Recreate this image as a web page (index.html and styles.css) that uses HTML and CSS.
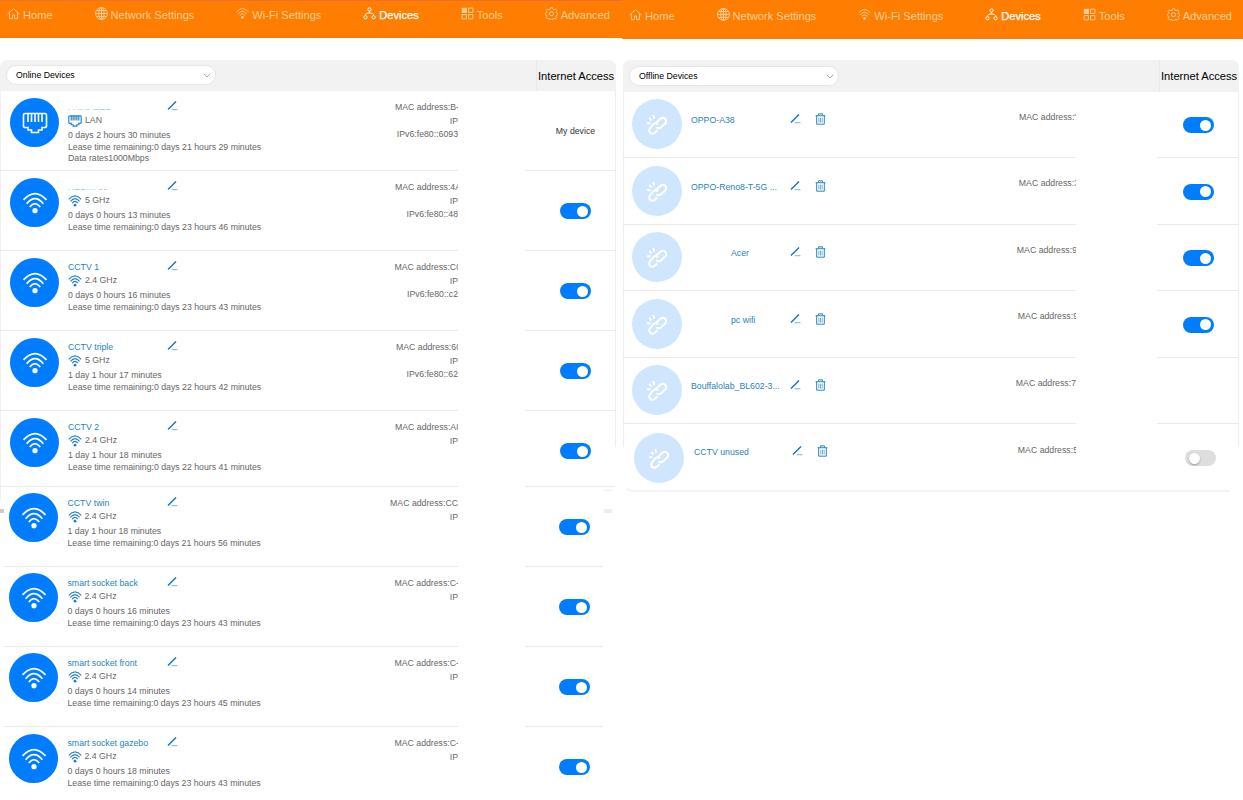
FILE: index.html
```html
<!DOCTYPE html>
<html lang="en">
<head>
    <meta charset="UTF-8">
    <meta name="viewport" content="width=device-width, initial-scale=1.0">
    <title>Devices</title>
    <link rel="stylesheet" href="styles.css">
</head>
<body>
    <!-- Icons -->
    <svg class="sprite" width="0" height="0">
        <symbol id="home" viewBox="0 0 24 24"><path d="M1 13 12 3l11 10M4.500 11V21.500H10V15h4v6.500h5.500V11"/></symbol>
        <symbol id="globe" viewBox="0 0 24 24"><circle cx="12" cy="12" r="11"/><ellipse cx="12" cy="12" rx="5" ry="11"/><path d="M12 1v22M1 12h22M3 6.500h18M3 17.500h18"/></symbol>
        <symbol id="wifi" viewBox="0 0 24 21"><path d="M1 7.500Q12-4.500 23 7.500M4 11.200Q12 1.500 20 11.200M7 14.300Q12 8 17 14.300"/><circle class="solid" cx="12" cy="17.800" r="2.500"/></symbol>
        <symbol id="devices" viewBox="0 0 24 24"><circle cx="12" cy="4.500" r="3"/><circle cx="4.500" cy="19" r="3"/><circle cx="19.500" cy="19" r="3"/><path d="M12 7.500V11M4.500 16c0-4 3-5 7.500-5s7.500 1 7.500 5"/></symbol>
        <symbol id="tools" viewBox="0 0 24 24"><path class="solid" d="M1.500 1.500h9.500v9.500H1.500z"/><path d="M14 2h8v8h-8zM2 14h8v8H2zM14 14h8v8h-8z"/></symbol>
        <symbol id="gear" viewBox="0 0 24 24"><path d="M10 1.500h4l.7 2.800 2 .8 2.500-1.500 2.700 2.700-1.500 2.500.8 2 2.300.7v3l-2.300.7-.8 2 1.500 2.500-2.700 2.700-2.500-1.500-2 .8-.7 2.300h-4l-.7-2.300-2-.8-2.500 1.500-2.700-2.700 1.500-2.500-.8-2-2.300-.7v-3l2.300-.7.8-2L2.100 6.300l2.700-2.700 2.500 1.500 2-.8z"/><circle cx="12" cy="12.300" r="3.800"/></symbol>
        <symbol id="lan" viewBox="0 0 26 22"><path d="M3 1.500h20a1.500 1.500 0 0 1 1.500 1.500v11a1.500 1.500 0 0 1-1.500 1.500h-3v2.500h-3.500v2.500h-7V18H6v-2.500H3A1.500 1.500 0 0 1 1.500 14V3A1.500 1.500 0 0 1 3 1.500zM6 2v8M9.500 2v8M13 2v8M16.500 2v8M20 2v8"/></symbol>
        <symbol id="edit" viewBox="0 0 10 10"><path class="pen" d="M.9 8.600 8.200 1.300"/><path class="base" d="M4.300 8.800h5.200"/></symbol>
        <symbol id="trash" viewBox="0 0 20 22"><path d="M1 5h18M6.500 4.500V1.500h7v3M3 5v15.500h14V5"/><path class="slats" d="M7 8.500v9M10 8.500v9M13 8.500v9"/></symbol>
        <symbol id="unlink" viewBox="0 0 24 24"><path d="M11.300 10.500l4.200-3.700a3.300 3.300 0 0 1 4.700 4.700l-4 3.800a3.300 3.300 0 0 1-4.700 0M13 12.200a3.300 3.300 0 0 0-4.600.2l-3.300 3.700a3.300 3.300 0 0 0 4.700 4.700l2.700-2.600M9.300 6.800 8.200 3M6.500 8.500 4.200 6M5.500 11.500l-3.300-.6"/></symbol>
    </svg>

    <div class="page">
        <section class="screen online">
            <nav class="nav">
                <a><svg><use href="#home"/></svg>Home</a>
                <a><svg><use href="#globe"/></svg>Network Settings</a>
                <a><svg><use href="#wifi"/></svg>Wi-Fi Settings</a>
                <a class="active"><svg><use href="#devices"/></svg>Devices</a>
                <a><svg><use href="#tools"/></svg>Tools</a>
                <a><svg><use href="#gear"/></svg>Advanced</a>
            </nav>
            <div class="panel">
                <div class="panel-head">
                    <div class="select">Online Devices<svg viewBox="0 0 8 5"><path d="M.8.8 4 4 7.200.8"/></svg></div>
                    <div class="access-title">Internet Access</div>
                </div>
                <div class="row">
                    <div class="device">
                        <div class="avatar"><svg class="lan"><use href="#lan"/></svg></div>
                        <div class="info">
                            <div class="name"><span class="hidden-name">PAINASEB</span><svg class="edit"><use href="#edit"/></svg></div>
                            <div class="band"><svg class="lan"><use href="#lan"/></svg>LAN</div>
                            <p>0 days 2 hours 30 minutes</p>
                            <p>Lease time remaining:0 days 21 hours 29 minutes</p>
                            <p>Data rates1000Mbps</p>
                        </div>
                        <div class="address"><p class="cut-1">MAC address:B-</p><p>IP</p><p>IPv6:fe80::6093</p></div>
                    </div>
                    <div class="access">My device</div>
                </div>
                <div class="row">
                    <div class="device">
                        <div class="avatar"><svg><use href="#wifi"/></svg></div>
                        <div class="info">
                            <div class="name"><span class="hidden-name">REDMI 9J</span><svg class="edit"><use href="#edit"/></svg></div>
                            <div class="band"><svg><use href="#wifi"/></svg>5 GHz</div>
                            <p>0 days 0 hours 13 minutes</p>
                            <p>Lease time remaining:0 days 23 hours 46 minutes</p>
                        </div>
                        <div class="address"><p class="cut-3">MAC address:4A</p><p>IP</p><p>IPv6:fe80::48</p></div>
                    </div>
                    <div class="access"><i class="toggle"></i></div>
                </div>
                <div class="row">
                    <div class="device">
                        <div class="avatar"><svg><use href="#wifi"/></svg></div>
                        <div class="info">
                            <div class="name"><span>CCTV 1</span><svg class="edit"><use href="#edit"/></svg></div>
                            <div class="band"><svg><use href="#wifi"/></svg>2.4 GHz</div>
                            <p>0 days 0 hours 16 minutes</p>
                            <p>Lease time remaining:0 days 23 hours 43 minutes</p>
                        </div>
                        <div class="address"><p class="cut-3">MAC address:C0</p><p>IP</p><p>IPv6:fe80::c2</p></div>
                    </div>
                    <div class="access"><i class="toggle"></i></div>
                </div>
                <div class="row">
                    <div class="device">
                        <div class="avatar"><svg><use href="#wifi"/></svg></div>
                        <div class="info">
                            <div class="name"><span>CCTV triple</span><svg class="edit"><use href="#edit"/></svg></div>
                            <div class="band"><svg><use href="#wifi"/></svg>5 GHz</div>
                            <p>1 day 1 hour 17 minutes</p>
                            <p>Lease time remaining:0 days 22 hours 42 minutes</p>
                        </div>
                        <div class="address"><p class="cut-3">MAC address:60</p><p>IP</p><p>IPv6:fe80::62</p></div>
                    </div>
                    <div class="access"><i class="toggle"></i></div>
                </div>
                <div class="row short">
                    <div class="device">
                        <div class="avatar"><svg><use href="#wifi"/></svg></div>
                        <div class="info">
                            <div class="name"><span>CCTV 2</span><svg class="edit"><use href="#edit"/></svg></div>
                            <div class="band"><svg><use href="#wifi"/></svg>2.4 GHz</div>
                            <p>1 day 1 hour 18 minutes</p>
                            <p>Lease time remaining:0 days 22 hours 41 minutes</p>
                        </div>
                        <div class="address"><p class="cut-3">MAC address:A8</p><p>IP</p></div>
                    </div>
                    <div class="access"><i class="toggle"></i></div>
                </div>
                <div class="row lower">
                    <div class="device">
                        <div class="avatar"><svg><use href="#wifi"/></svg></div>
                        <div class="info">
                            <div class="name"><span>CCTV twin</span><svg class="edit"><use href="#edit"/></svg></div>
                            <div class="band"><svg><use href="#wifi"/></svg>2.4 GHz</div>
                            <p>1 day 1 hour 18 minutes</p>
                            <p>Lease time remaining:0 days 21 hours 56 minutes</p>
                        </div>
                        <div class="address"><p>MAC address:CC</p><p>IP</p></div>
                    </div>
                    <div class="access"><i class="toggle"></i></div>
                </div>
                <div class="row lower">
                    <div class="device">
                        <div class="avatar"><svg><use href="#wifi"/></svg></div>
                        <div class="info">
                            <div class="name"><span>smart socket back</span><svg class="edit"><use href="#edit"/></svg></div>
                            <div class="band"><svg><use href="#wifi"/></svg>2.4 GHz</div>
                            <p>0 days 0 hours 16 minutes</p>
                            <p>Lease time remaining:0 days 23 hours 43 minutes</p>
                        </div>
                        <div class="address"><p class="cut-1">MAC address:C-</p><p>IP</p></div>
                    </div>
                    <div class="access"><i class="toggle"></i></div>
                </div>
                <div class="row lower">
                    <div class="device">
                        <div class="avatar"><svg><use href="#wifi"/></svg></div>
                        <div class="info">
                            <div class="name"><span>smart socket front</span><svg class="edit"><use href="#edit"/></svg></div>
                            <div class="band"><svg><use href="#wifi"/></svg>2.4 GHz</div>
                            <p>0 days 0 hours 14 minutes</p>
                            <p>Lease time remaining:0 days 23 hours 45 minutes</p>
                        </div>
                        <div class="address"><p class="cut-1">MAC address:C-</p><p>IP</p></div>
                    </div>
                    <div class="access"><i class="toggle"></i></div>
                </div>
                <div class="row lower last">
                    <div class="device">
                        <div class="avatar"><svg><use href="#wifi"/></svg></div>
                        <div class="info">
                            <div class="name"><span>smart socket gazebo</span><svg class="edit"><use href="#edit"/></svg></div>
                            <div class="band"><svg><use href="#wifi"/></svg>2.4 GHz</div>
                            <p>0 days 0 hours 18 minutes</p>
                            <p>Lease time remaining:0 days 23 hours 43 minutes</p>
                        </div>
                        <div class="address"><p class="cut-1">MAC address:C-</p><p>IP</p></div>
                    </div>
                    <div class="access"><i class="toggle"></i></div>
                </div>
            </div>
        </section>

        <section class="screen offline">
            <nav class="nav">
                <a><svg><use href="#home"/></svg>Home</a>
                <a><svg><use href="#globe"/></svg>Network Settings</a>
                <a><svg><use href="#wifi"/></svg>Wi-Fi Settings</a>
                <a class="active"><svg><use href="#devices"/></svg>Devices</a>
                <a><svg><use href="#tools"/></svg>Tools</a>
                <a><svg><use href="#gear"/></svg>Advanced</a>
            </nav>
            <div class="panel">
                <div class="panel-head">
                    <div class="select">Offline Devices<svg viewBox="0 0 8 5"><path d="M.8.8 4 4 7.200.8"/></svg></div>
                    <div class="access-title">Internet Access</div>
                </div>
                <div class="row">
                    <div class="device">
                        <div class="avatar"><svg><use href="#unlink"/></svg></div>
                        <div class="name"><span>OPPO-A38</span><svg class="edit"><use href="#edit"/></svg><svg class="trash"><use href="#trash"/></svg></div>
                        <div class="address"><p>MAC address:'</p></div>
                    </div>
                    <div class="access"><i class="toggle"></i></div>
                </div>
                <div class="row">
                    <div class="device">
                        <div class="avatar"><svg><use href="#unlink"/></svg></div>
                        <div class="name"><span>OPPO-Reno8-T-5G ...</span><svg class="edit"><use href="#edit"/></svg><svg class="trash"><use href="#trash"/></svg></div>
                        <div class="address"><p class="cut-3">MAC address:3</p></div>
                    </div>
                    <div class="access"><i class="toggle"></i></div>
                </div>
                <div class="row">
                    <div class="device">
                        <div class="avatar"><svg><use href="#unlink"/></svg></div>
                        <div class="name indent"><span>Acer</span><svg class="edit"><use href="#edit"/></svg><svg class="trash"><use href="#trash"/></svg></div>
                        <div class="address"><p class="cut-1">MAC address:9</p></div>
                    </div>
                    <div class="access"><i class="toggle"></i></div>
                </div>
                <div class="row">
                    <div class="device">
                        <div class="avatar"><svg><use href="#unlink"/></svg></div>
                        <div class="name indent"><span>pc wifi</span><svg class="edit"><use href="#edit"/></svg><svg class="trash"><use href="#trash"/></svg></div>
                        <div class="address"><p class="cut-2">MAC address:9</p></div>
                    </div>
                    <div class="access"><i class="toggle"></i></div>
                </div>
                <div class="row">
                    <div class="device">
                        <div class="avatar"><svg><use href="#unlink"/></svg></div>
                        <div class="name"><span>Bouffalolab_BL602-3...</span><svg class="edit"><use href="#edit"/></svg><svg class="trash"><use href="#trash"/></svg></div>
                        <div class="address"><p>MAC address:7</p></div>
                    </div>
                    <div class="access"></div>
                </div>
                <div class="row last">
                    <div class="device">
                        <div class="avatar"><svg><use href="#unlink"/></svg></div>
                        <div class="name"><span>CCTV unused</span><svg class="edit"><use href="#edit"/></svg><svg class="trash"><use href="#trash"/></svg></div>
                        <div class="address"><p class="cut-2">MAC address:5</p></div>
                    </div>
                    <div class="access"><i class="toggle off"></i></div>
                </div>
                <div class="panel-foot"></div>
            </div>
        </section>
    </div>
</body>
</html>
```
FILE: styles.css
```css
* {
    box-sizing: border-box;
}
body {
    margin: 0;
    background: #fff;
    font-family: "Liberation Sans", Arial, sans-serif;
    font-size: 8.74px;
    color: #666;
}
p {
    margin: 0;
}
svg {
    display: block;
    flex: none;
    fill: none;
    stroke: currentColor;
    stroke-width: 1.6;
}
.solid {
    fill: currentColor;
    stroke: none;
}
.sprite {
    display: none;
}
.page {
    display: grid;
    grid-template-columns: 622px 621px;
    height: 800px;
    overflow: hidden;
}

/* top menu */
.nav {
    display: flex;
    justify-content: space-between;
    height: 38px;
    padding: 7px 12px 0 7px;
    background: #ff7d00;
    color: #ffd09a;
    font-size: 11.1px;
    line-height: 16px;
    white-space: nowrap;
}
.online .nav {
    background: linear-gradient(90deg, #e8743a, #ef6a35) 0 0 / 100% 1px no-repeat #ff7d00;
}
.offline .nav {
    height: 39px;
    padding: 8px 11px 0 7px;
}
.nav a {
    display: flex;
    gap: 3px;
}
.nav svg {
    width: 13px;
    height: 13px;
    stroke-width: 1.8;
}
.nav .active {
    color: #fff;
    -webkit-text-stroke: 0.25px #fff;
}

/* panels */
.panel {
    margin-top: 22px;
    background:
        linear-gradient(#f1f1f1, #f1f1f1) 0 10px / 1px 430px no-repeat,
        linear-gradient(#eee, #eee) 615px 10px / 1px 377px no-repeat,
        linear-gradient(#ccc, #ccc) 0 449px / 4px 4px no-repeat,
        linear-gradient(#eee, #eee) 604px 449px / 8px 4px no-repeat,
        linear-gradient(#eee, #eee) 604px 430px / 8px 1px no-repeat;
}
.offline .panel {
    width: 616px;
    margin: 21px 0 0 1px;
    background:
        linear-gradient(#eee, #eee) 0 10px / 1px 377px no-repeat,
        linear-gradient(#eee, #eee) 615px 10px / 1px 377px no-repeat;
}
.panel-head {
    display: flex;
    justify-content: space-between;
    width: 616px;
    height: 31px;
    background: #f2f2f2;
    border-radius: 7px 7px 0 0;
    color: #000;
}
.offline .panel-head {
    height: 31.5px;
}
.select {
    display: flex;
    align-items: center;
    justify-content: space-between;
    width: 210px;
    height: 20px;
    margin: 5px 0 0 6px;
    padding: 0 4px 0 9px;
    background: #fff;
    border: 1px solid #e6e6e6;
    border-radius: 10px;
}
.offline .select {
    margin-top: 6px;
}
.select svg {
    width: 8px;
    height: 5px;
    color: #aaa;
    stroke-width: 1;
}
.access-title {
    width: 80px;
    border-left: 1px solid #e9e9e9;
    padding-left: 1px;
    font-size: 11.15px;
    line-height: 32px;
    white-space: nowrap;
}

/* device rows */
.row {
    display: grid;
    grid-template-columns: 458px 90px;
    column-gap: 67px;
    height: 80px;
}
.short {
    height: 76px;
}
.device {
    display: flex;
    padding: 7px 0 0 10px;
    border-bottom: 1px solid #eaeaea;
    overflow: hidden;
    white-space: nowrap;
}
.access {
    display: flex;
    justify-content: center;
    padding: 32px 0 0 11px;
    border-bottom: 1px solid #eaeaea;
}
.row:nth-child(2) .access {
    padding-top: 35px;
    color: #333;
}
.row:nth-child(2) .access .toggle {
    margin-top: -3px;
}
.avatar {
    display: flex;
    align-items: center;
    justify-content: center;
    flex: none;
    width: 49px;
    height: 49px;
    border-radius: 50%;
    background: #007dff;
    color: #fff;
}
.avatar svg {
    width: 26px;
    height: 22px;
}
.info {
    margin: 4px 0 0 9px;
    line-height: 11.8px;
}
.name {
    display: flex;
    color: #2684b8;
}
.info .name span {
    width: 99px;
}
/* only the bottom edge of the letters stays visible */
.info .hidden-name {
    clip-path: inset(7.5px 0 0 0);
}
.edit {
    width: 11px;
    height: 11px;
}
.pen {
    stroke: #0a6fc2;
    stroke-width: 1.2;
}
.base {
    stroke: #7dbbe0;
    stroke-width: 1;
}
.info .edit {
    margin-top: -2px;
}
.band {
    display: flex;
    gap: 3px;
    height: 16px;
    padding-top: 1px;
}
.band svg {
    width: 14px;
    height: 12px;
    color: #2684c4;
    stroke-width: 1.9;
}
.band .lan {
    stroke-width: 2.2;
}
.address {
    margin-left: auto;
    padding-top: 3px;
    line-height: 13.6px;
    text-align: right;
}
.cut-1 {
    margin-right: -1px;
}
.cut-2 {
    margin-right: -2px;
}
.cut-3 {
    margin-right: -3px;
}
.toggle {
    display: block;
    width: 31px;
    height: 16px;
    padding: 2.5px 3.5px;
    border-radius: 8px;
    background: #007dff;
}
.toggle::before {
    content: "";
    display: block;
    width: 11px;
    height: 11px;
    margin-left: auto;
    border-radius: 50%;
    background: #fff;
}
.toggle.off {
    background: #dedede;
}
.toggle.off::before {
    margin-left: 0;
    box-shadow: 0 1px 2px #999;
}

/* lower rows are slightly narrower */
.lower .device {
    margin-left: 4px;
    padding: 6px 0 0 5px;
}
.lower .info {
    margin: 5px 0 0 9.500px;
}
.lower .address {
    padding-top: 4px;
}
.lower .access {
    width: 78px;
    padding: 32px 0 0 21px;
}
.last .device,
.last .access {
    border-bottom: 0;
}
.lower.last .device {
    padding-top: 7px;
}
.lower.last .info {
    margin-top: 4px;
}
.lower.last .address {
    padding-top: 3px;
}

/* offline list */
.offline .row {
    grid-template-columns: 453px 82px;
    column-gap: 81px;
    height: 66.5px;
}
.offline .avatar {
    width: 50px;
    height: 50px;
    background: #d0e6ff;
}
.offline .avatar svg {
    width: 24px;
    height: 24px;
    stroke-width: 2;
}
.offline .device {
    padding: 7.5px 0 0 9px;
}
.offline .name {
    margin: 14px 0 0 9px;
}
.offline .name span {
    width: 99px;
    padding-top: 2px;
}
.offline .indent span {
    width: 59px;
}
.offline .indent {
    padding-left: 40px;
}
.trash {
    width: 11px;
    height: 12px;
    margin-left: 14px;
    stroke-width: 1.8;
}
.slats {
    stroke-width: 1.2;
}
.offline .address {
    padding-top: 11.5px;
}
.offline .row .access {
    padding: 25.500px 0 0 1px;
}
.offline .row .access .toggle {
    margin-top: 0;
}
.offline .last .device {
    padding: 8.5px 0 0 11px;
}
.offline .last .name {
    margin: 12px 0 0 10px;
}
.offline .last .edit {
    margin-left: -1px;
}
.offline .row.last .access {
    padding: 26px 0 0 5px;
}
.panel-foot {
    width: 605px;
    height: 8px;
    margin: -6.500px 0 0 2px;
    border-bottom: 2px solid #f3f3f3;
    border-radius: 0 0 0 7px;
}
```
